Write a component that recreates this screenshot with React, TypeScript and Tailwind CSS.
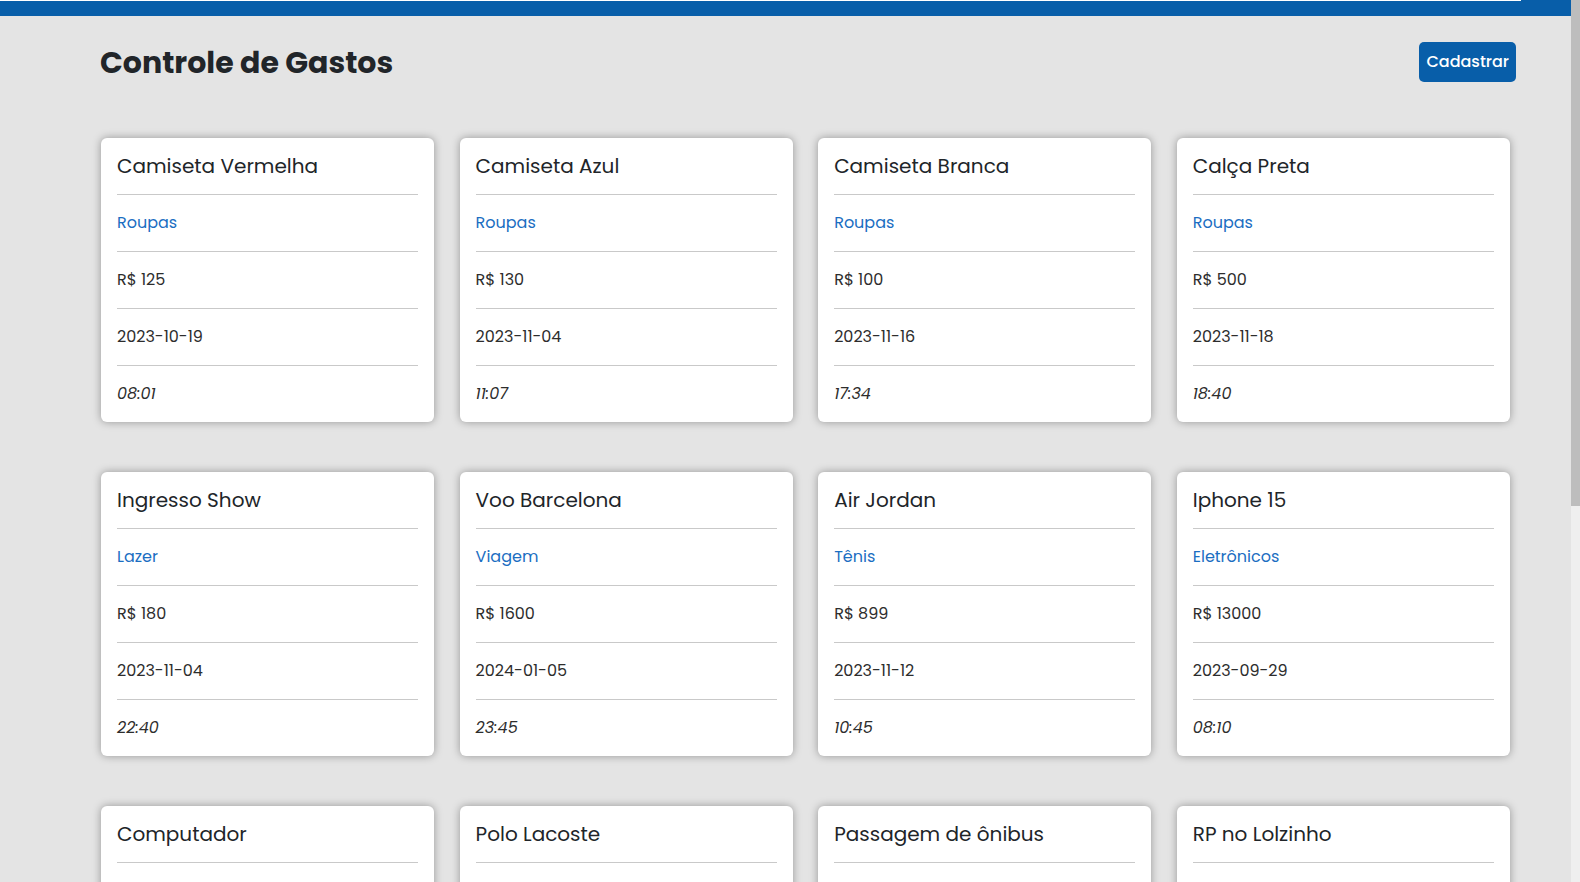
import React from "react";

type Item = { name: string; cat: string; price: string; date: string; time: string };

const items: Item[] = [
  { name: "Camiseta Vermelha", cat: "Roupas", price: "R$ 125", date: "2023-10-19", time: "08:01" },
  { name: "Camiseta Azul", cat: "Roupas", price: "R$ 130", date: "2023-11-04", time: "11:07" },
  { name: "Camiseta Branca", cat: "Roupas", price: "R$ 100", date: "2023-11-16", time: "17:34" },
  { name: "Calça Preta", cat: "Roupas", price: "R$ 500", date: "2023-11-18", time: "18:40" },
  { name: "Ingresso Show", cat: "Lazer", price: "R$ 180", date: "2023-11-04", time: "22:40" },
  { name: "Voo Barcelona", cat: "Viagem", price: "R$ 1600", date: "2024-01-05", time: "23:45" },
  { name: "Air Jordan", cat: "Tênis", price: "R$ 899", date: "2023-11-12", time: "10:45" },
  { name: "Iphone 15", cat: "Eletrônicos", price: "R$ 13000", date: "2023-09-29", time: "08:10" },
  { name: "Computador", cat: "Eletrônicos", price: "R$ 5000", date: "2023-10-02", time: "14:20" },
  { name: "Polo Lacoste", cat: "Roupas", price: "R$ 450", date: "2023-10-25", time: "16:30" },
  { name: "Passagem de ônibus", cat: "Viagem", price: "R$ 90", date: "2023-11-20", time: "07:15" },
  { name: "RP no Lolzinho", cat: "Lazer", price: "R$ 50", date: "2023-11-22", time: "21:00" },
];

function Card({ item }: { item: Item }) {
  return (
    <div className="bg-white rounded-[6px] shadow-[0_0_8px_rgba(0,0,0,0.35)] px-4">
      <div className="py-4 leading-6 text-[20px] text-[#212529] border-b border-[#c9c9c9]">{item.name}</div>
      <div className="py-4 leading-6 text-[16px] text-[#1b6ec2] border-b border-[#c9c9c9]">{item.cat}</div>
      <div className="py-4 leading-6 text-[16px] text-[#2d2d2d] border-b border-[#c9c9c9]">{item.price}</div>
      <div className="py-4 leading-6 text-[16px] text-[#2d2d2d] border-b border-[#c9c9c9]">{item.date}</div>
      <div className="py-4 leading-6 text-[16px] text-[#2d2d2d] italic">{item.time}</div>
    </div>
  );
}

export default function App() {
  return (
    <div
      className="h-[882px] w-[1580px] flex overflow-hidden bg-[#e4e4e4]"
      style={{ fontFamily: "Poppins, Inter, 'Noto Sans', sans-serif" }}
    >
      <div className="flex-1 flex flex-col overflow-hidden">
        <div className="h-4 shrink-0 bg-[#085ea9]">
          <div className="h-px w-[1521px] bg-white" />
        </div>
        <div className="shrink-0 pt-[26px] pl-[100px] pr-[55px] flex items-center justify-between h-[66px]">
          <h1 className="text-[30px] font-bold text-[#212529] leading-none mt-[2px]">Controle de Gastos</h1>
          <button className="h-10 px-[7px] rounded-[5px] bg-[#085ea9] text-white text-[16px] font-medium">Cadastrar</button>
        </div>
        <div className="mt-[56px] pl-[101px] grid grid-cols-[repeat(4,333.25px)] gap-x-[25.33px] gap-y-[50px]">
          {items.map((it) => (
            <Card key={it.name} item={it} />
          ))}
        </div>
      </div>
      <div className="w-[9px] shrink-0 flex flex-col">
        <div className="h-[506px] bg-[#bdbdbd]" />
        <div className="flex-1 bg-[#efefef]" />
      </div>
    </div>
  );
}
